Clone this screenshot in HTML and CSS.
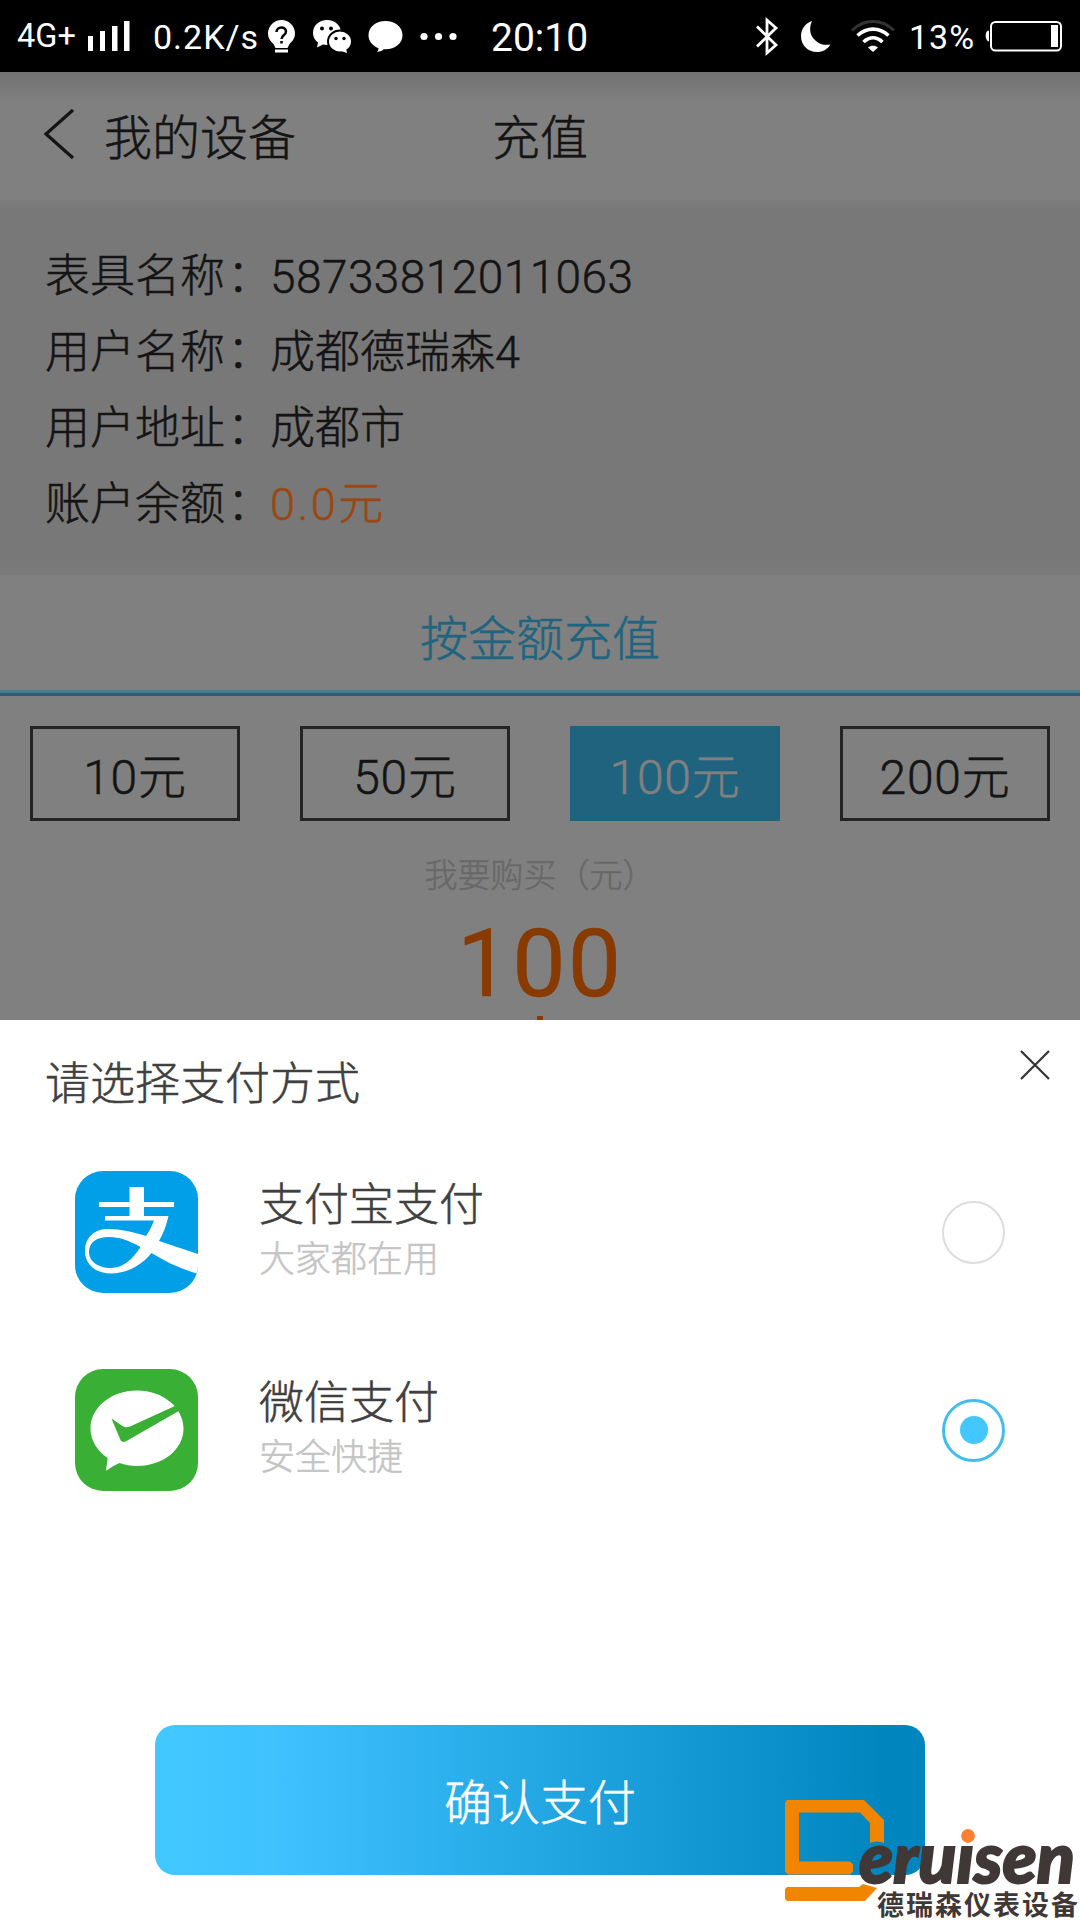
FILE: index.html
```html
<!DOCTYPE html>
<html lang="zh-CN">
<head>
<meta charset="utf-8">
<title>充值</title>
<link rel="stylesheet" href="styles.css">
</head>
<body>
<div class="screen">
  <div class="status">
    <span class="st net">4G+</span>
    <svg width="66" height="72" viewBox="87 0 66 72" fill="#fff"><path d="M88 36h5v15h-5zM100 31h5v20h-5zM112 26h5.500v25h-5.500zM124 21h5.500v30h-5.500z"/></svg>
    <span class="st speed">0.2K/s</span>
    <svg width="227" height="72" viewBox="264 0 227 72" fill="#fff">
      <path d="M281.500 20a13.500 13.500 0 0 1 13.500 13.500c0 5-3 8-5.500 10.500l-2 4h-12l-2-4c-2.500-2.500-5.500-5.500-5.500-10.500A13.500 13.500 0 0 1 281.500 20zM275 49.500h13v3h-13z"/>
      <path d="M276.500 32c0-6 9.500-6 9.500-.5 0 4-4.500 3.500-4.500 7.500M281.500 41v2.500" fill="none" stroke="#000" stroke-width="2.500"/>
      <path d="M327 20c8 0 14 5.500 14 12.500S335 45 327 45l-4-.5-6 3 1-5c-3-2-5-5.500-5-9.500C313 25.500 319 20 327 20z"/>
      <ellipse cx="340" cy="41.500" rx="12" ry="11" stroke="#000" stroke-width="2"/>
      <path d="M341 51l6 2-1-5z"/>
      <g fill="#000"><circle cx="322" cy="28.500" r="2"/><circle cx="331" cy="28.500" r="2"/><circle cx="336" cy="38.500" r="1.700"/><circle cx="344" cy="38.500" r="1.700"/></g>
      <path d="M385.500 21c9.500 0 17 6 17 14.200s-7.500 14-17 14h-2c-1 1.500-3 2.300-6.500 2.500 1-1 1.500-2 1.500-3.500-6-2.500-10-7-10-13C368.500 27 376 21 385.500 21z"/>
      <circle cx="424" cy="36.500" r="3.600"/><circle cx="438.500" cy="36.500" r="3.600"/><circle cx="453" cy="36.500" r="3.600"/>
    </svg>
    <span class="st time">20:10</span>
    <svg width="159" height="72" viewBox="750 0 159 72">
      <path d="M757 26.500l19 18.500-9 8V20l9 8-19 18.500" fill="none" stroke="#fff" stroke-width="2.800"/>
      <path d="M812 21c-4 9-1 16 4 20 4 3.500 9 4.500 14.500 3.500-3 5-8 7.500-13.500 7.500-9 0-16-6.500-16-16 0-7 4.500-13 11-15z" fill="#fff"/>
      <g fill="none"><path d="M852 30.500c12-12 30-12 42 0" stroke="#333" stroke-width="3"/>
      <path d="M857.500 35.500c9.500-8.500 21.500-8.500 31 0M863.500 42c6-5.500 13-5.500 19 0" stroke="#fff" stroke-width="3.600"/></g>
      <path d="M868 47.500c3-2.500 7-2.500 10 0l-5 4.500z" fill="#fff"/>
    </svg>
    <span class="st pct">13%</span>
    <svg width="97" height="72" viewBox="983 0 97 72">
      <path d="M989 30.500c-5 0-4 11 0 11z" fill="#fff"/>
      <rect x="991" y="22" width="70" height="28.500" rx="4.500" fill="none" stroke="#fff" stroke-width="2"/>
      <path d="M1051 25h7v22h-7z" fill="#fff"/>
    </svg>
  </div>

  <div class="nav">
    <div class="back">
      <svg width="61" height="60" viewBox="0 0 61 60"><path d="M30 6L3 30l27 24" fill="none" stroke="#141414" stroke-width="3.200"/></svg>
      <span>我的设备</span>
    </div>
    <div class="title">充值</div>
    <div class="side"></div>
  </div>

  <div class="info">
    <div class="row"><span class="label">表具名称<span class="colon">：</span></span><span class="num">58733812011063</span></div>
    <div class="row"><span class="label">用户名称<span class="colon">：</span></span><span>成都德瑞森4</span></div>
    <div class="row"><span class="label">用户地址<span class="colon">：</span></span><span>成都市</span></div>
    <div class="row"><span class="label">账户余额<span class="colon">：</span></span><span class="balance">0.0元</span></div>
  </div>

  <div class="tab">按金额充值</div>
  <div class="amounts">
    <div class="amount">10元</div>
    <div class="amount">50元</div>
    <div class="amount selected">100元</div>
    <div class="amount">200元</div>
  </div>
  <div class="buy">
    <div class="hint">我要购买（元）</div>
    <div class="value">100</div>
    <div class="caret"></div>
  </div>

  <div class="sheet">
    <div class="sheet-head">
      <h2>请选择支付方式</h2>
      <svg class="close" width="30" height="30" viewBox="0 0 30 30"><path d="M1 1l28 28M29 1L1 29" stroke="#333" stroke-width="2.200"/></svg>
    </div>
    <div class="method">
      <svg width="123" height="122" viewBox="0 0 123 122">
        <defs><clipPath id="tile"><rect width="123" height="122" rx="28"/></clipPath></defs>
        <g clip-path="url(#tile)">
          <rect width="123" height="122" fill="#009fe8"/>
          <path d="M54.500 16H69v15h30v5H69v9h24.500c-2 9-5 17-9.500 25l39 13v20c-17-5-32-12-46.500-21C66 95 51 102.500 36 102.500c-15 0-26-9-26-22C10 66 20 58 33 58c13 0 25 3 38 7 3.500-5 6-10 8-15.500H30V45h24.500v-9H24v-5h30.500zM65.500 76C55 70 45 66 34 66 22 66 14 71 14 81c0 10 10 16 22 16 12 0 22-9 29.500-21z" fill="#fff" fill-rule="evenodd"/>
        </g>
      </svg>
      <div class="desc"><div class="name">支付宝支付</div><div class="sub">大家都在用</div></div>
      <div class="radio"></div>
    </div>
    <div class="method">
      <svg width="123" height="122" viewBox="0 0 123 122">
        <rect width="123" height="122" rx="28" fill="#39b035"/>
        <path d="M62 21.500c26 0 46.500 17 46.500 38S88 97 62 97c-6 0-12-1-17.500-3-5 2-9 5-13.500 7.700l1.700-12.700C22 82 15.500 71 15.500 59.500c0-21 20.500-38 46.500-38z" fill="#fff"/>
        <path d="M36.500 49.700c4 2 8.500 6 12.500 8 2 1 4 .5 6-.3L101 36.500l4.500 4.500-54 31c-3 1.500-5 1-6-1z" fill="#39b035"/>
      </svg>
      <div class="desc"><div class="name">微信支付</div><div class="sub">安全快捷</div></div>
      <div class="radio on"></div>
    </div>
    <div class="confirm">确认支付</div>
  </div>

  <svg class="brand" width="300" height="130" viewBox="780 1790 300 130">
    <defs><linearGradient id="ink" gradientUnits="userSpaceOnUse" x1="0" y1="1800" x2="0" y2="1900"><stop offset=".435" stop-color="#ff8033"/><stop offset=".435" stop-color="#3f3836"/></linearGradient></defs>
    <path d="M787 1800h77l20 20v23q-7-3-14 0v-20l-10-10.500h-61v49h51l3 3v7l-3 3h-62l-3-3v-69z" fill="#f28500"/>
    <path d="M787 1887h72l4-3 14 4-12 13h-78l-2-2v-10z" fill="#f28500"/>
    <text class="brand-en" x="859" y="1883" textLength="216" lengthAdjust="spacingAndGlyphs" fill="url(#ink)" stroke="url(#ink)" stroke-width="2">eruisen</text>
    <text class="brand-cn" x="877" y="1914.500" textLength="201" fill="#3f3836">德瑞森仪表设备</text>
  </svg>
</div>
</body>
</html>
```

FILE: styles.css
```css
* { box-sizing: border-box; }
body { margin: 0; font-family: "Noto Sans CJK SC", sans-serif; font-weight: 300; color: #141414; -webkit-text-stroke: .5px; }
svg { display: block; flex: none; }
.screen { position: relative; width: 1080px; height: 1920px; overflow: hidden; background: #808080; display: flex; flex-direction: column; }
.status { height: 72px; background: #000; display: flex; align-items: center; flex: none; -webkit-text-stroke: 0; }
.st { font-family: Roboto, sans-serif; font-weight: 400; color: #fff; white-space: nowrap; flex: none; line-height: 72px; }
.net { width: 87px; padding-left: 17px; font-size: 32.5px; }
.speed { width: 111px; font-size: 34px; letter-spacing: 1px; padding-top: 2px; }
.time { width: 259px; font-size: 39px; padding-top: 3px; }
.pct { width: 74px; font-size: 34px; letter-spacing: 1px; padding-top: 2px; }

.nav { height: 128px; flex: none; display: flex; align-items: center; font-size: 48px; line-height: 72px; background: linear-gradient(#727272, #808080 32px); padding: 0 43px 4px; }
.back { flex: 1; display: flex; align-items: center; }
.side { flex: 1; }

.info, .amount, .value { font-family: Roboto, "Noto Sans CJK SC", sans-serif; }
.info { height: 375px; flex: none; background: linear-gradient(#7c7c7c, #787878 10px, #787878 365px, #7c7c7c); padding: 39px 45px 0; font-size: 45px; }
.row { height: 76px; line-height: 76px; display: flex; }
.label { width: 225px; display: flex; }
.colon { padding-left: 2px; width: 45px; flex: none; }
.num { font-size: 46px; letter-spacing: .45px; }
.balance { color: #9b4712; letter-spacing: 2.5px; }

.tab { height: 121px; flex: none; border-bottom: 3px solid #2b5e75; box-shadow: inset 0 -3px #4a7b90; color: #20647f; font-size: 48px; line-height: 121px; text-align: center; }
.amounts { display: flex; gap: 60px; padding: 30px 30px 0; flex: none; }
.amount { flex: 1; height: 95px; border: 3px solid #242424; font-size: 48px; line-height: 98px; letter-spacing: .8px; text-align: center; }
.amount.selected { background: #20637f; border-color: #20637f; color: #808080; }
.buy { flex: none; height: 199px; display: flex; flex-direction: column; align-items: center; padding-top: 28px; }
.hint { font-size: 33px; line-height: 48px; color: #686868; }
.value { height: 119px; line-height: 133px; font-size: 95px; font-weight: 400; letter-spacing: 2px; color: #883a00; }
.caret { width: 6px; height: 4px; background: #883a00; }

.sheet { flex: 1; background: #fff; display: flex; flex-direction: column; color: #404040; }
.sheet-head { height: 113px; display: flex; justify-content: space-between; padding: 30px 30px 0 45px; }
h2 { margin: 0; font-size: 45px; line-height: 62px; font-weight: 300; }
.method { height: 198px; display: flex; align-items: center; padding: 0 75px; }
.desc { margin-left: 61px; flex: 1; padding-bottom: 13px; }
.name { font-size: 45px; line-height: 60px; }
.sub { font-size: 36px; line-height: 48px; color: #c4c4c4; }
.radio { width: 63px; height: 63px; border: 2px solid #ddd; border-radius: 50%; display: flex; }
.radio.on { border: 3px solid #42bdeb; }
.radio.on::after { content: ""; width: 28px; height: 28px; margin: auto; border-radius: 50%; background: #42c8ff; }
.confirm { width: 770px; height: 150px; margin: 196px auto 0; border-radius: 20px; background: linear-gradient(90deg, #42c8ff, #3fc2ff 15%, #0085bf 95%); color: #fff; font-size: 48px; line-height: 149px; text-align: center; }

.brand { position: absolute; right: 0; bottom: 0; -webkit-text-stroke: 0; }
.brand-en { font-family: Lato, sans-serif; font-size: 70px; font-weight: 900; font-style: italic; -webkit-text-stroke: 2px; }
.brand-cn { font-size: 27px; font-weight: 700; }
```
